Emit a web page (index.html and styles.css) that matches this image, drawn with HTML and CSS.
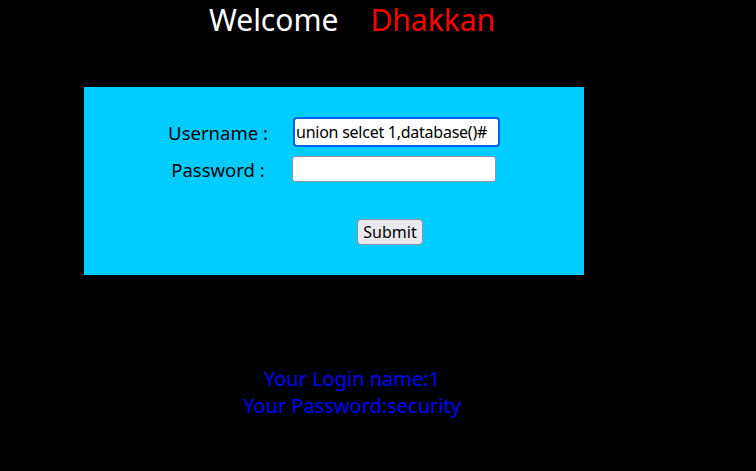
FILE: index.html
```html
<!DOCTYPE html>
<html lang="en">
<head>
  <meta charset="UTF-8">
  <title>Less-1 Login</title>
  <link rel="stylesheet" href="styles.css">
</head>
<body>
  <div class="page">
    <div class="welcome">Welcome<span class="name">Dhakkan</span></div>

    <div class="login-box">
      <form class="login-form" action="" method="post">
        <label class="label" for="uname">Username :</label>
        <input id="uname" class="field focused" type="text" name="uname" value="union selcet 1,database()#">
        <label class="label" for="passwd">Password :</label>
        <input id="passwd" class="field" type="text" name="passwd" value="">
        <div class="submit-cell">
          <input class="submit" type="submit" name="submit" value="Submit">
        </div>
      </form>
    </div>

    <div class="result">
      <div>Your Login name:1</div>
      <div>Your Password:security</div>
    </div>
  </div>
</body>
</html>
```

FILE: styles.css
```css
body {
  margin: 0;
  background-color: #000000;
  font-family: "Noto Sans", "Open Sans", sans-serif;
}
.page {
  width: 704px;
}
.welcome {
  color: #ffffff;
  font-size: 30px;
  line-height: 40px;
  text-align: center;
}
.name {
  color: #ff0000;
  margin-left: 32px;
}
.login-box {
  margin: 47px 0 0 84px;
  width: 500px;
  height: 188px;
  background-color: #00ccff;
  box-sizing: border-box;
  padding-top: 30px;
}
.login-form {
  display: grid;
  grid-template-columns: 148px 204px;
  row-gap: 9px;
  align-items: center;
  padding-left: 60px;
  margin: 0;
}
.label {
  text-align: center;
  font-size: 18.5px;
  color: #000000;
}
.field {
  box-sizing: border-box;
  width: 204px;
  height: 26px;
  margin: 0;
  padding: 1px 2px;
  border: 1px solid #8f8f9d;
  border-radius: 3px;
  background: #ffffff;
  font-family: "Noto Sans", sans-serif;
  font-size: 16px;
  letter-spacing: -0.25px;
  color: #000000;
  outline: none;
}
.field.focused {
  width: 207px;
  height: 30px;
  margin-left: 1px;
  padding: 1px 1px;
  border: 2px solid #0060df;
  border-radius: 4px;
}
.submit-cell {
  grid-column: 2;
  padding: 28px 0 0 65px;
}
.submit {
  box-sizing: border-box;
  width: 66px;
  height: 26px;
  padding: 0;
  border: 1px solid #8f8f9d;
  border-radius: 4px;
  background-color: #e9e9ed;
  font-family: "Noto Sans", sans-serif;
  font-size: 16px;
  color: #000000;
}
.result {
  margin-top: 90px;
  color: #0000ff;
  font-size: 20px;
  line-height: 27px;
  text-align: center;
}
```
